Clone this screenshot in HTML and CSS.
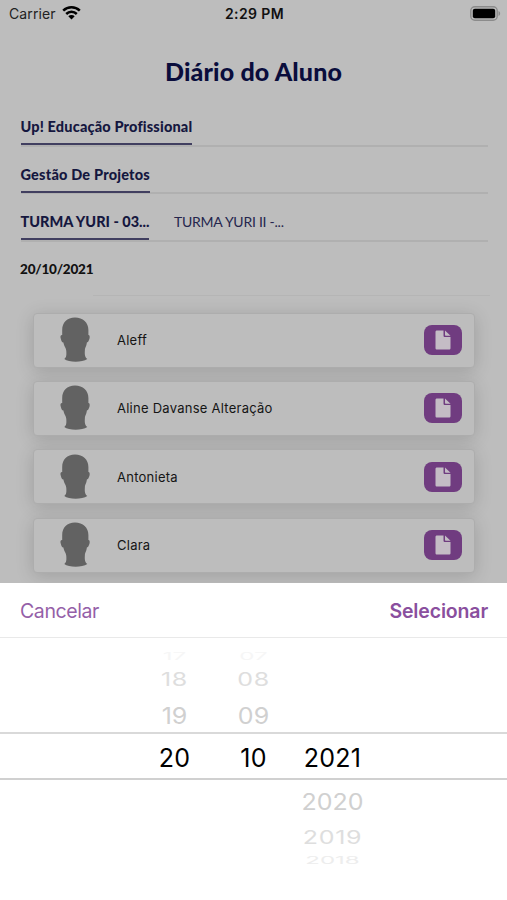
FILE: index.html
```
<!DOCTYPE html>
<html lang="pt-BR">
    <head>
        <meta charset="UTF-8">
        <title>Diário do Aluno</title>
        <link rel="stylesheet" href="styles.css">
    </head>
    <body>
        <svg class="symbols" width="0" height="0">
            <symbol id="head" viewBox="0 0 30 46">
                <path d="M15 .5C7 .5 2.200 5.500 2.200 13v5C.2 17.500.2 20 .9 22c.6 2 .9 3.500 2.500 3.500C4 29.500 6 30.500 6.300 34c.2 4 .3 6-2 8C9 45.600 22 45.600 27.300 42c-2.500-1.800-2.700-4.500-2.400-9 .2-2.800 1.500-3.500 2-7.500C28.400 25 28.800 23.500 29.400 22c.6-2 .4-4-1-4V13C28.400 5.500 23 .5 15 .5z"/>
            </symbol>
            <symbol id="file" viewBox="0 0 16 20">
                <path d="M2 .5h6.500v5c0 1 .5 1.500 1.500 1.500h5.500v11c0 1-.5 1.500-1.500 1.500H2c-1 0-1.500-.5-1.500-1.500V2C.5 1 1 .5 2 .5z"/>
                <path d="M10 .5l5.500 5.300H11c-.7 0-1-.3-1-1z"/>
            </symbol>
        </svg>
        <div class="screen">
            <div class="status">
                <div class="carrier">Carrier
                    <svg class="wifi" width="19" height="14" viewBox="0 0 19 14">
                        <path d="M1.200 4.700a12 12 0 0 1 16.600 0M4.200 8a7.600 7.600 0 0 1 10.600 0" fill="none" stroke="#000" stroke-width="2.500"/>
                        <path d="M6.300 10.200a4.600 4.600 0 0 1 6.400 0L9.500 13.600z"/>
                    </svg>
                </div>
                <div class="time">2:29 PM</div>
                <svg class="battery" width="31" height="15" viewBox="0 0 31 15">
                    <rect x=".8" y=".8" width="26.400" height="13.400" rx="4" fill="none" stroke="#8b8b8b" stroke-width="1.400"/>
                    <rect x="2.800" y="2.800" width="22.400" height="9.400" rx="2"/>
                    <path d="M28.500 5v5c2.200-.8 2.200-4.200 0-5z" fill="#8b8b8b"/>
                </svg>
            </div>
            <h1>Diário do Aluno</h1>
            <div class="tabs"><span class="tab active school">Up! Educação Profissional</span></div>
            <div class="tabs"><span class="tab active course">Gestão De Projetos</span></div>
            <div class="tabs">
                <span class="tab active group">TURMA YURI - 03...</span>
                <span class="tab other">TURMA YURI II -...</span>
            </div>
            <div class="date">20/10/2021</div>
            <div class="list">
                <div class="card">
                    <svg class="avatar"><use href="#head"/></svg>
                    <span class="name">Aleff</span>
                    <span class="button"><svg><use href="#file"/></svg></span>
                </div>
                <div class="card">
                    <svg class="avatar"><use href="#head"/></svg>
                    <span class="name">Aline Davanse Alteração</span>
                    <span class="button"><svg><use href="#file"/></svg></span>
                </div>
                <div class="card">
                    <svg class="avatar"><use href="#head"/></svg>
                    <span class="name">Antonieta</span>
                    <span class="button"><svg><use href="#file"/></svg></span>
                </div>
                <div class="card">
                    <svg class="avatar"><use href="#head"/></svg>
                    <span class="name">Clara</span>
                    <span class="button"><svg><use href="#file"/></svg></span>
                </div>
            </div>
        </div>
        <div class="sheet">
            <div class="actions">
                <span class="cancel">Cancelar</span>
                <span class="select">Selecionar</span>
            </div>
            <div class="picker">
                <div class="wheel far up"><span>17</span><span>07</span><span></span></div>
                <div class="wheel mid up"><span>18</span><span>08</span><span></span></div>
                <div class="wheel near up"><span>19</span><span>09</span><span></span></div>
                <div class="wheel current"><span>20</span><span>10</span><span>2021</span></div>
                <div class="wheel near"><span></span><span></span><span>2020</span></div>
                <div class="wheel mid"><span></span><span></span><span>2019</span></div>
                <div class="wheel far"><span></span><span></span><span>2018</span></div>
            </div>
        </div>
    </body>
</html>
```
FILE: styles.css
```
*{
    box-sizing:border-box;
}
body{
    margin:0;
    height:900px;
    overflow:hidden;
    background:#fff;
    font-family:Inter, "Liberation Sans", sans-serif;
}
.symbols{
    display:none;
}
.screen{
    height:583px;
    overflow:hidden;
    background:#bdbdbd;
}
.status{
    display:grid;
    grid-template-columns:1fr auto 1fr;
    align-items:center;
    height:28px;
    padding:0 7px 0 9px;
    font-size:14px;
    color:#222;
}
.carrier{
    display:flex;
    align-items:center;
    gap:6px;
    margin-top:-2px;
    letter-spacing:0.1px;
}
.wifi{
    margin-top:-1px;
}
.time{
    margin-top:-1px;
    font-weight:600;
    letter-spacing:0.4px;
    color:#111;
}
.battery{
    justify-self:end;
    margin:-2px -1px 0 0;
}
h1{
    margin:26px 0 0;
    height:45px;
    line-height:35px;
    text-align:center;
    font-family:Lato, sans-serif;
    font-size:25px;
    font-weight:900;
    letter-spacing:0.15px;
    color:#0a0d3c;
}
.tabs{
    display:flex;
    gap:25px;
    height:47.5px;
    margin:0 19px 0 20.5px;
    padding-top:12px;
    border-bottom:2px solid #b0b0b0;
}
.tab{
    height:35px;
    line-height:32px;
    white-space:nowrap;
    font-family:Lato, sans-serif;
    font-size:14.5px;
    color:#25264d;
}
.active{
    height:34px;
    border-bottom:2px solid #413f60;
    font-weight:900;
    color:#15173f;
}
.school{
    width:171.5px;
    letter-spacing:0.17px;
}
.course{
    width:129.5px;
    letter-spacing:0.2px;
}
.group{
    width:128.5px;
}
.other{
    font-size:14px;
    letter-spacing:-0.25px;
}
.date{
    height:48px;
    margin:6px 17px 0 20px;
    line-height:42px;
    font-family:Lato, sans-serif;
    font-size:13.5px;
    font-weight:900;
    letter-spacing:-0.2px;
    color:#111;
    background:linear-gradient(#b5b5b5, #b5b5b5) 73px 100% / 100% 1px no-repeat;
}
.list{
    display:flex;
    flex-direction:column;
    gap:13.4px;
    padding:17px 32px 0 33px;
}
.card{
    display:flex;
    flex-shrink:0;
    align-items:center;
    height:55px;
    padding:0 12px 0 26px;
    border:1px solid #adadad;
    border-radius:4px;
    background:#bdbdbd;
    box-shadow:0 3px 18px rgba(0, 0, 0, 0.16);
}
.avatar{
    width:30px;
    height:46px;
    fill:#626262;
}
.name{
    flex:1;
    margin-left:27px;
    font-size:13px;
    letter-spacing:0.25px;
    color:#151515;
}
.button{
    display:flex;
    align-items:center;
    justify-content:center;
    width:38px;
    height:30px;
    border-radius:8px;
    background:#703c80;
}
.button svg{
    width:16px;
    height:20px;
    fill:#c4bcc5;
}
.sheet{
    height:317px;
    background:#fff;
}
.actions{
    display:flex;
    justify-content:space-between;
    height:55px;
    padding:0 19px 0 20px;
    border-bottom:1px solid #e9e9e9;
    line-height:56px;
    font-size:19.5px;
    letter-spacing:-0.4px;
    color:#955fa8;
}
.select{
    font-weight:600;
    letter-spacing:-0.15px;
    color:#8a4f9e;
}
.picker{
    padding-top:9px;
}
.wheel{
    display:grid;
    grid-template-columns:79px 79px 79px;
    justify-content:center;
    text-align:center;
    font-size:25px;
}
.wheel span{
    transform:scaleY(var(--squash, 1));
}
.current{
    height:48px;
    border-top:2px solid #d9d9d9;
    border-bottom:2px solid #d0d0d0;
    line-height:49px;
    letter-spacing:0.3px;
    color:#000;
}
.near{
    --squash:0.92;
    height:45px;
    line-height:45px;
    color:#d0d0d0;
}
.near.up{
    height:39px;
    line-height:46px;
}
.mid{
    --squash:0.72;
    height:26px;
    line-height:26px;
    letter-spacing:0.7px;
    color:#dedede;
}
.far{
    --squash:0.42;
    height:20px;
    line-height:20px;
    font-size:24px;
    color:#ededed;
}
.far.up{
    color:#f6f6f6;
}
```
